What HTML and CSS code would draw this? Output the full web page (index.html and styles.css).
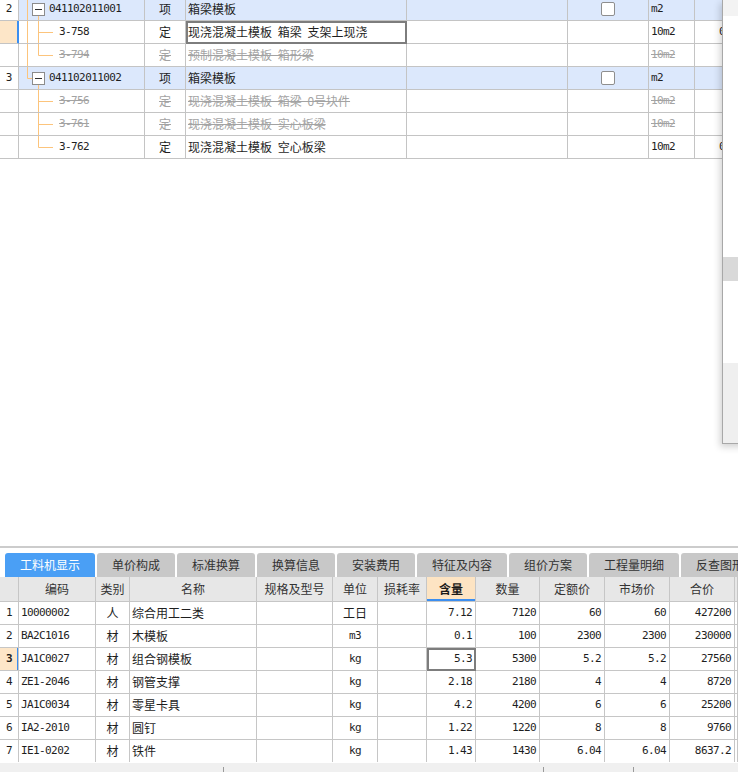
FILE: index.html
```html
<!DOCTYPE html>
<html lang="zh-CN">
<head>
<meta charset="utf-8">
<title>工料机显示</title>
<link rel="stylesheet" href="styles.css">
</head>
<body>
<div class="top-pane">
  <div class="tgrid">
    <div class="row item">
      <div class="cell num">2</div>
      <div class="cell tree"><svg class="tw30" width="30" height="22"><line x1="8.5" y1="0" x2="8.5" y2="22" class="tl"/><line x1="19.5" y1="17" x2="19.5" y2="22" class="tl"/><rect x="13.5" y="5.5" width="12" height="12" class="box"/><line x1="16" y1="11.5" x2="23" y2="11.5" class="minus"/></svg><span class="mono">041102011001</span></div>
      <div class="cell center">项</div>
      <div class="cell name">箱梁模板</div>
      <div class="cell"></div>
      <div class="cell center"><span class="chk"></span></div>
      <div class="cell unit mono">m2</div>
      <div class="cell"></div>
    </div>
    <div class="row">
      <div class="cell num sel"></div>
      <div class="cell tree"><svg width="40" height="22"><line x1="8.5" y1="0" x2="8.5" y2="22" class="tl"/><line x1="19.5" y1="0" x2="19.5" y2="22" class="tl"/><line x1="19.5" y1="11.5" x2="34" y2="11.5" class="tl"/></svg><span class="mono">3-758</span></div>
      <div class="cell center">定</div>
      <div class="cell name focus">现浇混凝土模板 箱梁 支架上现浇</div>
      <div class="cell"></div>
      <div class="cell"></div>
      <div class="cell unit mono">10m2</div>
      <div class="cell extra mono">0</div>
    </div>
    <div class="row off">
      <div class="cell num"></div>
      <div class="cell tree"><svg width="40" height="22"><line x1="8.5" y1="0" x2="8.5" y2="22" class="tl"/><line x1="19.5" y1="0" x2="19.5" y2="11.5" class="tl"/><line x1="19.5" y1="11.5" x2="34" y2="11.5" class="tl"/></svg><span class="mono strike">3-794</span></div>
      <div class="cell center"><span class="strike">定</span></div>
      <div class="cell name"><span class="strike">预制混凝土模板 箱形梁</span></div>
      <div class="cell"></div>
      <div class="cell"></div>
      <div class="cell unit mono"><span class="strike">10m2</span></div>
      <div class="cell"></div>
    </div>
    <div class="row item">
      <div class="cell num">3</div>
      <div class="cell tree"><svg width="30" height="22"><line x1="8.5" y1="0" x2="8.5" y2="11.5" class="tl"/><line x1="8.5" y1="11.5" x2="13" y2="11.5" class="tl"/><line x1="19.5" y1="17" x2="19.5" y2="22" class="tl"/><rect x="13.5" y="5.5" width="12" height="12" class="box"/><line x1="16" y1="11.5" x2="23" y2="11.5" class="minus"/></svg><span class="mono">041102011002</span></div>
      <div class="cell center">项</div>
      <div class="cell name">箱梁模板</div>
      <div class="cell"></div>
      <div class="cell center"><span class="chk"></span></div>
      <div class="cell unit mono">m2</div>
      <div class="cell"></div>
    </div>
    <div class="row off">
      <div class="cell num"></div>
      <div class="cell tree"><svg width="40" height="22"><line x1="19.5" y1="0" x2="19.5" y2="22" class="tl"/><line x1="19.5" y1="11.5" x2="34" y2="11.5" class="tl"/></svg><span class="mono strike">3-756</span></div>
      <div class="cell center"><span class="strike">定</span></div>
      <div class="cell name"><span class="strike">现浇混凝土模板 箱梁 0号块件</span></div>
      <div class="cell"></div>
      <div class="cell"></div>
      <div class="cell unit mono"><span class="strike">10m2</span></div>
      <div class="cell"></div>
    </div>
    <div class="row off">
      <div class="cell num"></div>
      <div class="cell tree"><svg width="40" height="22"><line x1="19.5" y1="0" x2="19.5" y2="22" class="tl"/><line x1="19.5" y1="11.5" x2="34" y2="11.5" class="tl"/></svg><span class="mono strike">3-761</span></div>
      <div class="cell center"><span class="strike">定</span></div>
      <div class="cell name"><span class="strike">现浇混凝土模板 实心板梁</span></div>
      <div class="cell"></div>
      <div class="cell"></div>
      <div class="cell unit mono"><span class="strike">10m2</span></div>
      <div class="cell"></div>
    </div>
    <div class="row">
      <div class="cell num"></div>
      <div class="cell tree"><svg width="40" height="22"><line x1="19.5" y1="0" x2="19.5" y2="11.5" class="tl"/><line x1="19.5" y1="11.5" x2="34" y2="11.5" class="tl"/></svg><span class="mono">3-762</span></div>
      <div class="cell center">定</div>
      <div class="cell name">现浇混凝土模板 空心板梁</div>
      <div class="cell"></div>
      <div class="cell"></div>
      <div class="cell unit mono">10m2</div>
      <div class="cell extra mono">0</div>
    </div>
  </div>
  <div class="side-panel">
    <div class="sp-head"></div>
    <div class="sp-white1"></div>
    <div class="sp-band"></div>
    <div class="sp-white2"></div>
    <div class="sp-foot"></div>
  </div>
</div>
<div class="splitter"></div>
<div class="tabs">
  <div class="tab w90 active">工料机显示</div>
  <div class="tab">单价构成</div>
  <div class="tab">标准换算</div>
  <div class="tab">换算信息</div>
  <div class="tab">安装费用</div>
  <div class="tab w90">特征及内容</div>
  <div class="tab">组价方案</div>
  <div class="tab w90">工程量明细</div>
  <div class="tab">反查图形</div>
</div>
<div class="bgrid">
  <div class="row head">
    <div class="cell"></div>
    <div class="cell">编码</div>
    <div class="cell">类别</div>
    <div class="cell">名称</div>
    <div class="cell">规格及型号</div>
    <div class="cell">单位</div>
    <div class="cell">损耗率</div>
    <div class="cell hl">含量</div>
    <div class="cell">数量</div>
    <div class="cell">定额价</div>
    <div class="cell">市场价</div>
    <div class="cell">合价</div>
    <div class="cell"></div>
  </div>
  <div class="row">
    <div class="cell num mono">1</div><div class="cell code mono">10000002</div><div class="cell center">人</div><div class="cell name">综合用工二类</div><div class="cell"></div><div class="cell center">工日</div><div class="cell"></div><div class="cell r mono">7.12</div><div class="cell r mono">7120</div><div class="cell r mono">60</div><div class="cell r mono">60</div><div class="cell r mono">427200</div><div class="cell"></div>
  </div>
  <div class="row">
    <div class="cell num mono">2</div><div class="cell code mono">BA2C1016</div><div class="cell center">材</div><div class="cell name">木模板</div><div class="cell"></div><div class="cell center mono">m3</div><div class="cell"></div><div class="cell r mono">0.1</div><div class="cell r mono">100</div><div class="cell r mono">2300</div><div class="cell r mono">2300</div><div class="cell r mono">230000</div><div class="cell"></div>
  </div>
  <div class="row">
    <div class="cell num mono sel">3</div><div class="cell code mono">JA1C0027</div><div class="cell center">材</div><div class="cell name">组合钢模板</div><div class="cell"></div><div class="cell center mono">kg</div><div class="cell"></div><div class="cell r mono focus">5.3</div><div class="cell r mono">5300</div><div class="cell r mono">5.2</div><div class="cell r mono">5.2</div><div class="cell r mono">27560</div><div class="cell"></div>
  </div>
  <div class="row">
    <div class="cell num mono">4</div><div class="cell code mono">ZE1-2046</div><div class="cell center">材</div><div class="cell name">钢管支撑</div><div class="cell"></div><div class="cell center mono">kg</div><div class="cell"></div><div class="cell r mono">2.18</div><div class="cell r mono">2180</div><div class="cell r mono">4</div><div class="cell r mono">4</div><div class="cell r mono">8720</div><div class="cell"></div>
  </div>
  <div class="row">
    <div class="cell num mono">5</div><div class="cell code mono">JA1C0034</div><div class="cell center">材</div><div class="cell name">零星卡具</div><div class="cell"></div><div class="cell center mono">kg</div><div class="cell"></div><div class="cell r mono">4.2</div><div class="cell r mono">4200</div><div class="cell r mono">6</div><div class="cell r mono">6</div><div class="cell r mono">25200</div><div class="cell"></div>
  </div>
  <div class="row">
    <div class="cell num mono">6</div><div class="cell code mono">IA2-2010</div><div class="cell center">材</div><div class="cell name">圆钉</div><div class="cell"></div><div class="cell center mono">kg</div><div class="cell"></div><div class="cell r mono">1.22</div><div class="cell r mono">1220</div><div class="cell r mono">8</div><div class="cell r mono">8</div><div class="cell r mono">9760</div><div class="cell"></div>
  </div>
  <div class="row last">
    <div class="cell num mono">7</div><div class="cell code mono">IE1-0202</div><div class="cell center">材</div><div class="cell name">铁件</div><div class="cell"></div><div class="cell center mono">kg</div><div class="cell"></div><div class="cell r mono">1.43</div><div class="cell r mono">1430</div><div class="cell r mono">6.04</div><div class="cell r mono">6.04</div><div class="cell r mono">8637.2</div><div class="cell"></div>
  </div>
</div>
<div class="hscroll">
  <span class="tick t1"></span><span class="tick t2"></span><span class="tick t3"></span>
</div>
</body>
</html>
```

FILE: styles.css
```css
html, body {
  margin: 0;
  padding: 0;
}
body {
  width: 738px;
  height: 772px;
  overflow: hidden;
  display: flex;
  flex-direction: column;
  background: #ffffff;
  color: #1e1e1e;
  font-family: "Noto Sans CJK SC", "Noto Sans", sans-serif;
  font-size: 12px;
}

.mono {
  font-family: "DejaVu Sans Mono", "Noto Sans CJK SC", monospace;
  font-size: 11px;
  letter-spacing: -0.6px;
}

/* ---------- top pane ---------- */
.top-pane {
  position: relative;
  height: 546px;
  flex: none;
  overflow: hidden;
}
.tgrid {
  margin-top: -2px;
}
.row {
  display: grid;
  height: 23px;
}
.tgrid .row {
  grid-template-columns: 19px 126px 41px 221px 161px 81px 46px 1fr;
}
.cell {
  box-sizing: border-box;
  border-right: 1px solid #c4c4c4;
  border-bottom: 1px solid #c4c4c4;
  line-height: 22px;
  white-space: nowrap;
  overflow: hidden;
}
.tgrid .item .cell {
  background: #dce8fc;
}
.tgrid .item .cell.num {
  background: #ffffff;
}
.num {
  text-align: center;
  font-family: "DejaVu Sans Mono", monospace;
  font-size: 11px;
}
.num.sel {
  background: #fde6c8;
  border-right-color: #3b8ef0;
  box-shadow: inset -1px 0 #3b8ef0;
  font-weight: bold;
}
.center {
  text-align: center;
}
.tree {
  display: flex;
  align-items: center;
  overflow: visible;
}
.tree svg {
  display: block;
  flex: none;
  align-self: flex-start;
}
.tl {
  stroke: #fcc47c;
  stroke-width: 1;
}
.box {
  fill: #ffffff;
  stroke: #8c8c8c;
  stroke-width: 1;
}
.minus {
  stroke: #333333;
  stroke-width: 1;
}
.name {
  padding-left: 2px;
  word-spacing: 3px;
}
.unit {
  padding-left: 2px;
}
.extra {
  padding-left: 24px;
}
.focus {
  outline: 2px solid #7d7d7d;
  outline-offset: -2px;
}
.off .cell {
  color: #a3a3a3;
}
.strike {
  text-decoration: line-through;
}
.chk {
  display: inline-block;
  width: 12px;
  height: 12px;
  margin-top: 4px;
  vertical-align: top;
  background: #ffffff;
  border: 1px solid #8e8e8e;
  border-radius: 2px;
}

/* overlay panel at the right edge */
.side-panel {
  position: absolute;
  top: 0;
  left: 722px;
  width: 40px;
  height: 443px;
  border-left: 1px solid #a8a8a8;
  border-bottom: 1px solid #a8a8a8;
  box-shadow: -2px 3px 7px rgba(0, 0, 0, 0.18);
  display: flex;
  flex-direction: column;
}
.sp-head { height: 16px; background: #f3f3f3; }
.sp-white1 { height: 241px; background: #ffffff; }
.sp-band { height: 24px; background: #d9d9d9; }
.sp-white2 { height: 82px; background: #ffffff; }
.sp-foot { height: 80px; background: #efefef; }

/* ---------- splitter + tabs ---------- */
.splitter {
  flex: none;
  height: 2px;
  background: #cccccc;
}
.tabs {
  flex: none;
  height: 29px;
  box-sizing: border-box;
  padding: 5px 0 0 5px;
  display: flex;
  gap: 2px;
  overflow: hidden;
}
.tab {
  flex: none;
  width: 78px;
  height: 24px;
  line-height: 24px;
  text-align: center;
  background: #c8c8c8;
  color: #333333;
  border-radius: 3px 3px 0 0;
}
.tab.w90 {
  width: 90px;
}
.tab.active {
  background: #4a9ff5;
  color: #ffffff;
}

/* ---------- bottom grid ---------- */
.bgrid {
  flex: none;
}
.bgrid .row {
  grid-template-columns: 19px 77px 34px 127px 76px 45px 49px 49px 64px 65px 65px 65px 1fr;
}
.bgrid .cell {
  border-color: #c6c6c6;
}
.bgrid .head {
  height: 25px;
}
.bgrid .head .cell {
  background: #e7e7e7;
  color: #333333;
  text-align: center;
  line-height: 24px;
}
.bgrid .head .cell.hl {
  background: #fde4c3;
  font-weight: bold;
  color: #1a1a1a;
  box-shadow: inset 0 -2px #3b8ef0;
}
.bgrid .row.last {
  height: 22px;
}
.bgrid .row.last .cell {
  border-bottom: none;
}
.code {
  padding-left: 2px;
}
.r {
  text-align: right;
  padding-right: 3px;
}

/* bottom scroll strip */
.hscroll {
  flex: 1;
  margin-top: 1px;
  background: #f0f0f0;
  display: flex;
  align-items: flex-end;
}
.tick {
  display: block;
  width: 1px;
  height: 5px;
  background: #9a9a9a;
}
.t1 { margin-left: 223px; }
.t2 { margin-left: 319px; }
.t3 { margin-left: 89px; }
```
